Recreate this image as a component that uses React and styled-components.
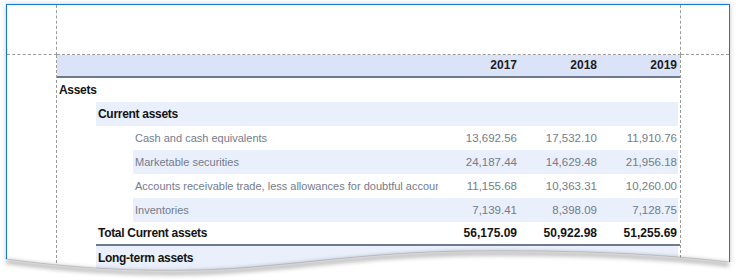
import React from 'react';
import styled, { createGlobalStyle } from 'styled-components';

const GlobalStyle = createGlobalStyle`
  html, body {
    margin: 0;
    padding: 0;
    background: #ffffff;
  }
  body {
    font-family: 'Liberation Sans', Arial, sans-serif;
  }
`;

const Stage = styled.div`
  position: relative;
  width: 736px;
  height: 280px;
  overflow: hidden;
  padding: 4px 0 0 6px;
  box-sizing: border-box;
  background: #ffffff;
`;

const Page = styled.div`
  display: grid;
  grid-template-columns: 50px 624px 1fr;
  grid-template-rows: 50px 1fr;
  width: 724px;
  height: 300px;
  box-sizing: border-box;
  border: 1px solid #1279d2;
  background: #ffffff;
  box-shadow: 0 0 5px rgba(0, 0, 0, 0.22);
`;

const Margin = styled.div`
  box-sizing: border-box;
  border-bottom: ${(p) => (p.top ? '1px dashed #9a9a9a' : 'none')};
  border-right: ${(p) => (p.guide ? '1px dashed #9a9a9a' : 'none')};
`;

const Report = styled.div`
  display: flex;
  flex-direction: column;
  box-sizing: border-box;
  border-right: 1px dashed #9a9a9a;
  min-width: 0;
`;

const HeaderBand = styled.div`
  display: flex;
  height: 21px;
  background: #dbe3f9;
  border-bottom: 2px solid #6f7a8e;
  padding-right: 2px;
`;

const Spacer = styled.div`
  flex: 1;
`;

const YearCell = styled.div`
  width: 80px;
  box-sizing: border-box;
  padding-right: 1px;
  text-align: right;
  font-size: 12px;
  font-weight: bold;
  line-height: 21px;
  color: #1c1c1c;
`;

const Row = styled.div`
  display: flex;
  height: ${(p) => (p.ruled ? '22px' : '24px')};
  margin-left: ${(p) => p.indent}px;
  margin-right: ${(p) => (p.ruled ? 0 : 2)}px;
  padding-right: ${(p) => (p.ruled ? 2 : 0)}px;
  background: ${(p) => (p.shaded ? '#e9effb' : 'transparent')};
  border-bottom: ${(p) => (p.ruled ? '2px solid #6f7a8e' : 'none')};
`;

const Label = styled.div`
  flex: 1;
  min-width: 0;
  overflow: hidden;
  white-space: nowrap;
  padding-left: 2px;
  font-size: ${(p) => (p.strong ? '12px' : '11px')};
  font-weight: ${(p) => (p.strong ? 'bold' : 'normal')};
  letter-spacing: ${(p) => (p.strong ? '-0.3px' : '0')};
  line-height: ${(p) => p.lh || 24}px;
  color: ${(p) => (p.strong ? '#141414' : '#737b8c')};
`;

const Value = styled.div`
  width: 80px;
  flex: none;
  box-sizing: border-box;
  padding-right: 1px;
  text-align: right;
  font-size: ${(p) => (p.strong ? '12px' : '11.5px')};
  font-weight: ${(p) => (p.strong ? 'bold' : 'normal')};
  line-height: ${(p) => p.lh || 24}px;
  color: ${(p) => (p.strong ? '#141414' : '#737b8c')};
`;

const TornEdge = styled.svg`
  position: absolute;
  left: 0;
  top: 0;
  width: 736px;
  height: 280px;
  pointer-events: none;
`;

const years = ['2017', '2018', '2019'];

const details = [
  { label: 'Cash and cash equivalents', values: ['13,692.56', '17,532.10', '11,910.76'] },
  { label: 'Marketable securities', values: ['24,187.44', '14,629.48', '21,956.18'], shaded: true },
  {
    label: 'Accounts receivable trade, less allowances for doubtful accounts',
    values: ['11,155.68', '10,363.31', '10,260.00'],
  },
  { label: 'Inventories', values: ['7,139.41', '8,398.09', '7,128.75'], shaded: true },
];

const edge = 'M6,259 C60,266 120,272 200,270 C280,268 360,252 470,251 C580,250 660,254 729,262';

const App = () => (
  <>
    <GlobalStyle />
    <Stage>
      <Page>
        <Margin top guide />
        <Margin top guide />
        <Margin top />
        <Margin guide />
        <Report>
          <HeaderBand>
            <Spacer />
            {years.map((y) => (
              <YearCell key={y}>{y}</YearCell>
            ))}
          </HeaderBand>
          <Row indent={0}>
            <Label strong>Assets</Label>
          </Row>
          <Row indent={39} shaded>
            <Label strong>Current assets</Label>
          </Row>
          {details.map((d) => (
            <Row key={d.label} indent={76} shaded={d.shaded}>
              <Label>{d.label}</Label>
              {d.values.map((v, i) => (
                <Value key={i}>{v}</Value>
              ))}
            </Row>
          ))}
          <Row indent={39} ruled>
            <Label strong lh={22}>Total Current assets</Label>
            {['56,175.09', '50,922.98', '51,255.69'].map((v) => (
              <Value key={v} strong lh={22}>{v}</Value>
            ))}
          </Row>
          <Row indent={39} shaded>
            <Label strong>Long-term assets</Label>
          </Row>
        </Report>
        <Margin />
      </Page>
      <TornEdge viewBox="0 0 736 280">
        <defs>
          <filter id="blur" x="-5%" y="-50%" width="110%" height="200%">
            <feGaussianBlur stdDeviation="2" />
          </filter>
        </defs>
        <path d={`${edge} L736,262 L736,280 L0,280 L0,259 Z`} fill="#ffffff" />
        <path d={edge} transform="translate(0,2.5)" fill="none" stroke="rgba(0,0,0,0.3)" strokeWidth="4" filter="url(#blur)" />
        <path d={edge} fill="none" stroke="rgba(0,0,0,0.14)" strokeWidth="1" />
      </TornEdge>
    </Stage>
  </>
);

export default App;
